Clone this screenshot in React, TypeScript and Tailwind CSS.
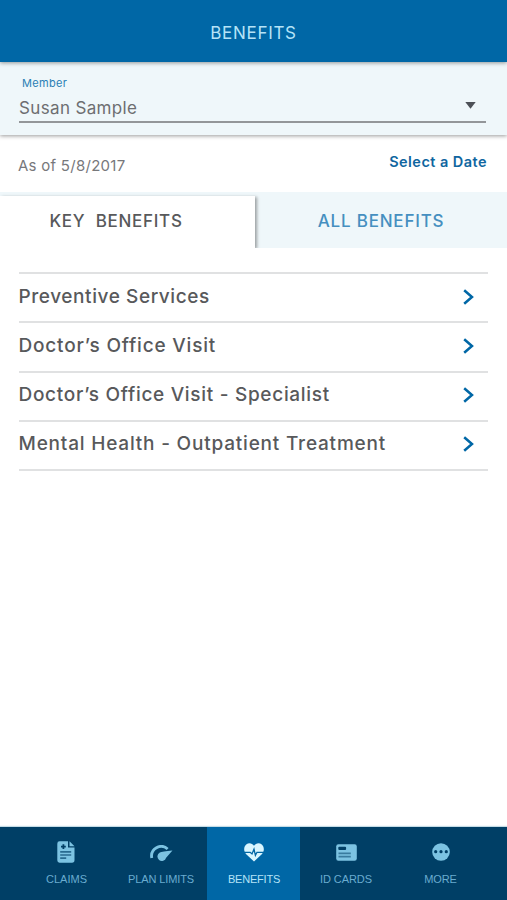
import type { ReactNode } from "react";

interface NavItemProps {
    label: string;
    className: string;
    labelClassName: string;
    children: ReactNode;
}

interface BenefitProps {
    label: string;
    className: string;
}

const benefits: BenefitProps[] = [
    { label: "Preventive Services", className: "pb-[2px] tracking-[0.58px]" },
    { label: "Doctor’s Office Visit", className: "pb-[2px] tracking-[0.8px]" },
    { label: "Doctor’s Office Visit - Specialist", className: "pb-[3px] tracking-[0.7px]" },
    { label: "Mental Health - Outpatient Treatment", className: "pb-[3px] tracking-[0.8px]" },
];

function BenefitRow({ label, className }: BenefitProps) {
    return (
        <li className="flex h-[49.25px] items-center justify-between border-b-2 border-[#e0e1e2] pr-[14px]">
            <span className={`-ml-[0.5px] text-[19px] leading-6 font-medium whitespace-nowrap text-[#58595b] ${className}`}>
                {label}
            </span>
            <svg width="11" height="16" viewBox="0 0 11 16" fill="none" className="mb-[2px] shrink-0">
                <path d="M1.2 1.2L9 8L1.2 14.8" stroke="#0067a6" strokeWidth="2.5" />
            </svg>
        </li>
    );
}

function NavItem({ label, className, labelClassName, children }: NavItemProps) {
    return (
        <button type="button" className={`flex h-full shrink-0 flex-col items-center pt-[12px] ${className}`}>
            <span className="flex h-[26px] items-center justify-center">{children}</span>
            <span className={`mt-[7px] text-[11px] leading-[14px] whitespace-nowrap ${labelClassName}`}>
                {label}
            </span>
        </button>
    );
}

function App() {
    return (
        <div className="flex h-[900px] w-[507px] flex-col overflow-hidden bg-white font-[Inter,sans-serif]">
            {/* Header */}
            <header className="z-20 flex h-[62px] shrink-0 items-center justify-center bg-[#0067a6] pt-[6px] shadow-[0_1px_4px_rgba(0,0,0,0.4)]">
                <h1 className="text-[17px] tracking-[0.7px] text-[#b5e3f7]">BENEFITS</h1>
            </header>

            {/* Member */}
            <section className="z-10 flex h-[73px] shrink-0 flex-col bg-[#eff7fa] px-[19px] pt-[13px] shadow-[0_1px_4px_rgba(0,0,0,0.4)]">
                <label className="pl-[3px] text-[11px] leading-4 tracking-[0.3px] text-[#2b7fb5]">Member</label>
                <div className="mr-[2px] flex h-[32px] items-center justify-between border-b-2 border-[#939699] pr-[10px]">
                    <span className="pt-[3px] text-[17px] leading-5 tracking-[0.35px] text-[#6d6e71]">Susan Sample</span>
                    <svg width="11" height="7" viewBox="0 0 11 7" className="mb-[2px]">
                        <path d="M0.3 0H10.7L5.5 6.8Z" fill="#4d5157" />
                    </svg>
                </div>
            </section>

            {/* Date */}
            <section className="flex h-[57px] shrink-0 justify-between pr-[20px] pl-[18px]">
                <span className="pt-[21px] text-[15px] leading-5 tracking-[0.27px] text-[#77787b]">As of 5/8/2017</span>
                <button
                    type="button"
                    className="h-5 pt-[17px] text-[14.5px] leading-5 font-semibold tracking-[0.45px] text-[#0f66a0]"
                >
                    Select a Date
                </button>
            </section>

            {/* Tabs */}
            <div className="flex h-[56px] shrink-0 overflow-hidden bg-[#eff7fa] pt-[4px]">
                <button
                    type="button"
                    className="w-[255px] bg-white pr-[23px] text-[17px] font-medium tracking-[0.7px] whitespace-pre text-[#58595b] shadow-[2px_1px_3px_rgba(0,0,0,0.35)]"
                >
                    {"KEY  BENEFITS"}
                </button>
                <button type="button" className="flex-1 text-[17px] font-medium tracking-[0.8px] text-[#458fc0]">
                    ALL BENEFITS
                </button>
            </div>

            {/* Benefit list */}
            <ul className="mx-[19px] mt-[24px] flex-1 border-t-2 border-[#e0e1e2]">
                {benefits.map((item) => (
                    <BenefitRow key={item.label} {...item} />
                ))}
            </ul>

            {/* Bottom navigation */}
            <nav className="flex h-[73px] shrink-0 bg-[#003f66] font-['Liberation_Sans',sans-serif] text-[#69acd0] shadow-[0_-1px_1px_#c5dce6]">
                <NavItem label="CLAIMS" className="w-[114px] pl-[19px]" labelClassName="">
                    <svg width="18" height="22" viewBox="0 0 18 22" className="mr-[2px]">
                        <path d="M2.5 0.3H11V6.5H17.5V19Q17.5 21.7 15 21.7H2.5Q0.3 21.7 0.3 19.3V2.7Q0.3 0.3 2.5 0.3Z" fill="#7cc3e2" />
                        <path d="M12.5 0.3L17.5 5.2H12.5Z" fill="#7cc3e2" />
                        <path d="M6.4 3.2V8M4 5.6H8.8" stroke="#003f66" strokeWidth="1.8" />
                        <path d="M3.2 10.8H14.2M3.2 14H14.2M3.2 17.2H9.2" stroke="#286b90" strokeWidth="1.7" />
                    </svg>
                </NavItem>
                <NavItem label="PLAN LIMITS" className="w-[93px] pl-px" labelClassName="tracking-[-0.1px]">
                    <svg width="23" height="17" viewBox="0 0 24 18" className="mt-[2px] ml-px">
                        <path d="M1.7 13.8A10.2 10.2 0 0 1 18.5 4.2" fill="none" stroke="#7cc3e2" strokeWidth="3" />
                        <path d="M23.6 5.8L16.9 13.5A4.7 4.7 0 1 1 10.2 8Q12.5 6.6 23.6 5.8Z" fill="#7cc3e2" />
                    </svg>
                </NavItem>
                <NavItem label="BENEFITS" className="w-[93px] bg-[#0067a6] pl-px" labelClassName="tracking-[-0.2px] text-[#b5e3f7]">
                    <svg width="20" height="19" viewBox="0 0 20 19">
                        <path
                            d="M10 18.6L2.2 11.2C-0.8 8.2 -0.2 3.5 2.2 1.6C4.8 -0.5 8.2 0.2 10 2.8C11.8 0.2 15.2 -0.5 17.8 1.6C20.2 3.5 20.8 8.2 17.8 11.2Z"
                            fill="#d9f6ff"
                        />
                        <path d="M0 9.3H6.2L8 11L10 6.2L11.4 12.4L13 9.3H20" fill="none" stroke="#0067a6" strokeWidth="1.3" />
                    </svg>
                </NavItem>
                <NavItem label="ID CARDS" className="w-[92px]" labelClassName="tracking-[-0.1px]">
                    <svg width="21" height="17" viewBox="0 0 21 17">
                        <rect x="0.2" y="0.2" width="20.6" height="16.6" rx="2.2" fill="#7cc3e2" />
                        <rect x="2.3" y="2.8" width="7.8" height="3.2" rx="1" fill="#003f66" />
                        <path d="M2.5 9.4H14.8M2.5 12.7H14.8" stroke="#397c9f" strokeWidth="1.8" />
                    </svg>
                </NavItem>
                <NavItem label="MORE" className="w-[115px] pr-[18px]" labelClassName="tracking-[-0.1px]">
                    <svg width="18" height="18" viewBox="0 0 18 18">
                        <circle cx="9" cy="9" r="8.8" fill="#7cc3e2" />
                        <circle cx="3.7" cy="8.7" r="1.6" fill="#003f66" />
                        <circle cx="9" cy="8.7" r="1.6" fill="#003f66" />
                        <circle cx="14.3" cy="8.7" r="1.6" fill="#003f66" />
                    </svg>
                </NavItem>
            </nav>
        </div>
    );
}

export default App;
